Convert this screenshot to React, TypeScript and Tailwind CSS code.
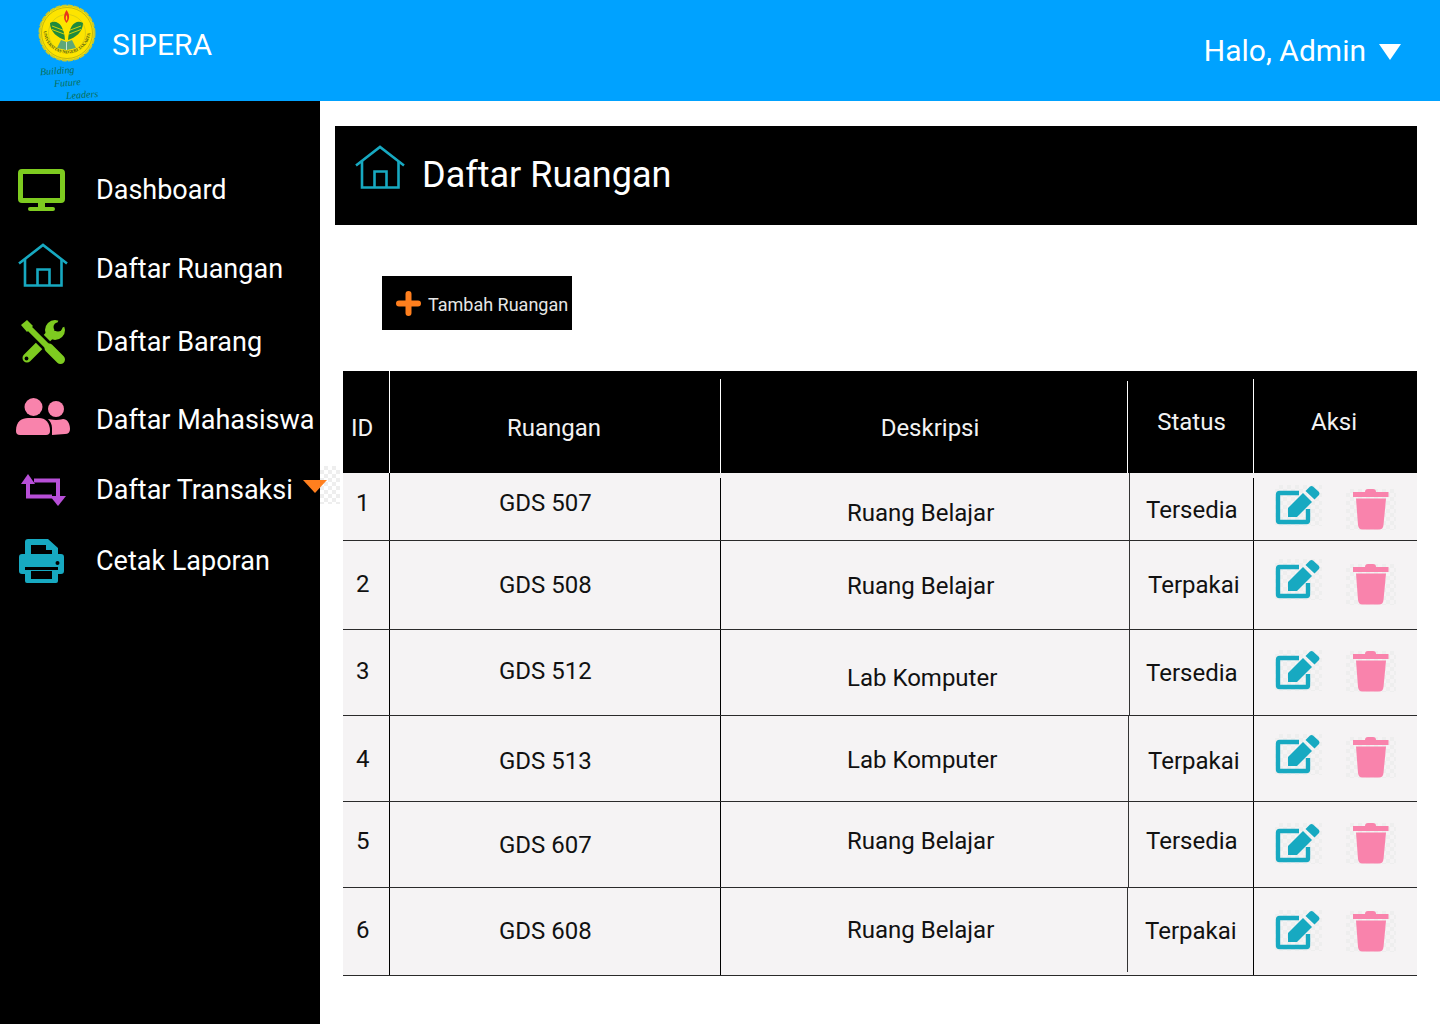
import React from 'react';

const TEAL = '#17a9c1';
const GREEN = '#7ecb20';
const PINK = '#f983ac';
const PURPLE = '#b84fd8';
const ORANGE = '#ff7f1e';

const CHECKER =
  'bg-[conic-gradient(#eeeeee_25%,transparent_0_50%,#eeeeee_0_75%,transparent_0)] bg-[length:8px_8px]';

const Logo = () => (
  <svg viewBox="0 0 60 60" className="w-[60px] h-[60px]">
    <defs>
      <path id="seal-arc" d="M6.5,27 A23.5,23.5 0 0 0 53.5,27" />
    </defs>
    <circle cx="30" cy="30" r="27.5" fill="#fde400" stroke="#c9c92a" strokeWidth="2" strokeDasharray="5 1.2" />
    <circle cx="30" cy="30" r="25.5" fill="none" stroke="#9a9a1a" strokeWidth="0.6" />
    <circle cx="30" cy="30" r="18.5" fill="none" stroke="#b8b820" strokeWidth="0.5" />
    <text fontSize="4.3" fill="#4d5a10" fontFamily="'Liberation Serif', serif" fontWeight="700">
      <textPath href="#seal-arc" startOffset="2%">
        UNIVERSITAS NEGERI JAKARTA
      </textPath>
    </text>
    <path d="M29.5,7 C26.5,12 26,16 29.5,20 C33,16 33,12 29.5,7 Z" fill="#e8341c" />
    <path d="M29.5,12 C28.5,14 28.5,16 29.5,18 C30.5,16 30.5,14 29.5,12 Z" fill="#fde400" />
    <path d="M13,20 C20,16 27,22 28,37 C21,35 13,29 13,20 Z" fill="#1f8a3c" />
    <path d="M46,20 C39,16 32,22 31,37 C38,35 46,29 46,20 Z" fill="#1f8a3c" />
    <path d="M15,23 L27,27.5 M15,26.5 L27,31 M44,23 L32,27.5 M44,26.5 L32,31" stroke="#fde400" strokeWidth="0.8" />
    <path d="M20,45 L24,37 L29.5,39 L35,37 L39,45 L29.5,47 Z" fill="#5fa878" />
    <path d="M29.5,39 V47" stroke="#fff" strokeWidth="0.7" />
  </svg>
);

const MonitorIcon = () => (
  <svg viewBox="0 0 47 42" className="w-[47px] h-[42px]" fill={GREEN}>
    <rect x="2.5" y="2.5" width="42" height="29" rx="1.5" fill="none" stroke={GREEN} strokeWidth="5" />
    <rect x="20" y="33" width="7" height="6" />
    <rect x="10" y="38" width="27" height="4" rx="2" />
  </svg>
);

const HouseIcon = () => (
  <svg viewBox="0 0 50 44" className="w-[50px] h-[44px]" fill="none" stroke={TEAL} strokeWidth="2.6">
    <path d="M1,20.5 L25,2 L49,20.5" />
    <path d="M7,16 V42.5 H43.5 V16" />
    <path d="M19.5,42.5 V26.5 H31.5 V42.5" />
  </svg>
);

const ToolsIcon = () => (
  <svg viewBox="0 0 44 44" className="w-[44px] h-[44px]" fill="none">
    <path d="M31,13 L6,38" stroke={GREEN} strokeWidth="9" strokeLinecap="round" />
    <circle cx="34" cy="10" r="10" fill={GREEN} />
    <path d="M33,11 L38,-1 H45 V6 Z" fill="#000" />
    <circle cx="37" cy="7" r="4.5" fill="#000" />
    <circle cx="5.5" cy="38.5" r="1.9" fill="#000" />
    <path d="M6,6 L30,30" stroke="#000" strokeWidth="11" />
    <path d="M6,6 L28,28" stroke={GREEN} strokeWidth="6" />
    <path d="M0,5 L6,0 L12,6 L6,12 Z" fill={GREEN} />
    <path d="M28,28 L39.5,39.5" stroke={GREEN} strokeWidth="9" strokeLinecap="round" />
  </svg>
);

const UsersIcon = () => (
  <svg viewBox="0 0 54 37" className="w-[54px] h-[37px]" fill={PINK}>
    <circle cx="17.5" cy="9" r="9" />
    <path d="M0,33 C0,23 6,20 12,20 H23 C29,20 34,24 34,33 Q34,37 30,37 H4 Q0,37 0,33 Z" />
    <circle cx="40" cy="11" r="8" />
    <path d="M36,37 V30 C36,26 34,23 32,21 C34,21 36,22 40,22 C44,22 46,21 47,21 C51,21 54,25 54,31 Q54,36 49,36 Z" />
  </svg>
);

const TransferIcon = () => (
  <svg viewBox="0 0 45 32" className="w-[45px] h-[32px]" fill={PURPLE}>
    <path d="M7,9 V22.5 H31 M13,6.5 H37 V22" fill="none" stroke={PURPLE} strokeWidth="4" />
    <path d="M0,10 L7,0 L14,10 Z" />
    <path d="M29,22 H45 L37,32 Z" />
  </svg>
);

const PrinterIcon = () => (
  <svg viewBox="0 0 45 44" className="w-[45px] h-[44px]" fill={TEAL}>
    <path d="M6,16 V3 Q6,0 9,0 H29 L39,9 V16 H33 V11 H27 V6 H12 V16 Z" />
    <path d="M3,15 H42 Q45,15 45,18 V32 Q45,35 42,35 H39 V42 Q39,44 37,44 H8 Q6,44 6,42 V35 H3 Q0,35 0,32 V18 Q0,15 3,15 Z" />
    <rect x="12" y="32" width="21" height="8" fill="#000" />
    <rect x="6" y="28" width="33" height="3" fill="#000" />
    <circle cx="38.5" cy="24" r="2" fill="#000" />
  </svg>
);

const EditIcon = () => (
  <svg viewBox="0 0 46 41" className="w-[46px] h-[41px]">
    <path d="M24,8 H4.5 Q3,8 3,9.5 V35.5 Q3,37 4.5,37 H31.5 Q33,37 33,35.5 V24" fill="none" stroke={TEAL} strokeWidth="4.4" />
    <path d="M13,32 V23 L28,8 L37,17 L22,32 Z" fill={TEAL} />
    <path d="M30.5,6 L35,1.5 Q36.5,0.5 38,1.5 L44,7 Q45,8.5 44,10 L39.5,14.5 Z" fill={TEAL} />
  </svg>
);

const TrashIcon = () => (
  <svg viewBox="0 0 36 41" className="w-[36px] h-[41px]" fill={PINK}>
    <path d="M12,3 Q12,0 15,0 H20 Q23,0 23,3 V4 H12 Z" />
    <rect x="0" y="3" width="35.5" height="5" />
    <path d="M3,9.5 H33 L30.5,36 Q30,40.5 26,40.5 H9.5 Q5.5,40.5 5,36 Z" />
  </svg>
);

const PlusIcon = () => (
  <svg viewBox="0 0 25 25" className="w-[25px] h-[25px]" stroke={ORANGE} strokeWidth="6" strokeLinecap="round">
    <path d="M12.5,3 V22 M3,12.5 H22" />
  </svg>
);

const menu = [
  { label: 'Dashboard', icon: <MonitorIcon />, row: 'mt-0', iconBox: 'pl-[18px]' },
  { label: 'Daftar Ruangan', icon: <HouseIcon />, row: 'mt-[29px]', iconBox: 'pl-[18px] pb-2' },
  { label: 'Daftar Barang', icon: <ToolsIcon />, row: 'mt-[23px]', iconBox: 'pl-[21px]' },
  { label: 'Daftar Mahasiswa', icon: <UsersIcon />, row: 'mt-[28px]', iconBox: 'pl-4 pb-2' },
  { label: 'Daftar Transaksi', icon: <TransferIcon />, row: 'mt-5', iconBox: 'pl-[21px]' },
  { label: 'Cetak Laporan', icon: <PrinterIcon />, row: 'mt-[21px]', iconBox: 'pl-[19px]' },
];

const rooms = [
  {
    id: '1', name: 'GDS 507', desc: 'Ruang Belajar', status: 'Tersedia',
    h: 'h-[68px]', idPt: 'pt-[15px]', namePt: 'pt-[15px]', descPt: 'pt-[25px]', statusPt: 'pt-[22px] pl-4',
    descW: 'w-[408px]', editPt: 'pt-3', trashPt: 'pt-4', sep: 'mt-[5px]',
  },
  {
    id: '2', name: 'GDS 508', desc: 'Ruang Belajar', status: 'Terpakai',
    h: 'h-[89px]', idPt: 'pt-[28px]', namePt: 'pt-[29px]', descPt: 'pt-[30px]', statusPt: 'pt-[29px] pl-[18px]',
    descW: 'w-[408px]', editPt: 'pt-[18px]', trashPt: 'pt-[23px]', sep: 'mt-0',
  },
  {
    id: '3', name: 'GDS 512', desc: 'Lab Komputer', status: 'Tersedia',
    h: 'h-[86px]', idPt: 'pt-[26px]', namePt: 'pt-[26px]', descPt: 'pt-[33px]', statusPt: 'pt-[28px] pl-4',
    descW: 'w-[408px]', editPt: 'pt-5', trashPt: 'pt-[21px]', sep: 'mt-0',
  },
  {
    id: '4', name: 'GDS 513', desc: 'Lab Komputer', status: 'Terpakai',
    h: 'h-[86px]', idPt: 'pt-[28px]', namePt: 'pt-[30px]', descPt: 'pt-[29px]', statusPt: 'pt-[30px] pl-[19px]',
    descW: 'w-[407px]', editPt: 'pt-[18px]', trashPt: 'pt-[21px]', sep: 'mt-0',
  },
  {
    id: '5', name: 'GDS 607', desc: 'Ruang Belajar', status: 'Tersedia',
    h: 'h-[86px]', idPt: 'pt-6', namePt: 'pt-7', descPt: 'pt-6', statusPt: 'pt-6 pl-[17px]',
    descW: 'w-[407px]', editPt: 'pt-[21px]', trashPt: 'pt-[21px]', sep: 'mt-0',
  },
  {
    id: '6', name: 'GDS 608', desc: 'Ruang Belajar', status: 'Terpakai',
    h: 'h-[88px]', idPt: 'pt-[27px]', namePt: 'pt-7', descPt: 'pt-[27px]', statusPt: 'pt-7 pl-[17px]',
    descW: 'w-[406px]', editPt: 'pt-[22px]', trashPt: 'pt-[23px]', sep: 'mt-0',
  },
];

export default function App() {
  return (
    <div className="w-[1440px] h-[1024px] overflow-hidden flex flex-col bg-white font-['Roboto',sans-serif]">
      {/* top bar */}
      <header className="h-[101px] shrink-0 bg-[#00a2ff] flex justify-between text-white">
        <div className="relative flex pl-[37px] pt-[3px]">
          <Logo />
          <span className="absolute left-[40px] top-[66px] -rotate-[4deg] text-[10px] leading-none italic text-[#0b6e5a] font-['Liberation_Serif',serif]">
            Building
          </span>
          <span className="absolute left-[54px] top-[78px] -rotate-[4deg] text-[10px] leading-none italic text-[#0b6e5a] font-['Liberation_Serif',serif]">
            Future
          </span>
          <span className="absolute left-[66px] top-[90px] -rotate-[4deg] text-[10px] leading-none italic text-[#0b6e5a] font-['Liberation_Serif',serif]">
            Leaders
          </span>
          <span className="ml-[15px] mt-[24px] text-[30px] leading-9">SIPERA</span>
        </div>
        <div className="flex items-start pt-[31px] pr-[39px]">
          <span className="text-[30px] leading-10">Halo, Admin</span>
          <span className="ml-[13px] mt-[13px] w-0 h-0 border-l-[11px] border-r-[11px] border-t-[16px] border-l-transparent border-r-transparent border-t-white" />
        </div>
      </header>

      <div className="flex flex-1">
        {/* sidebar */}
        <aside className="w-[320px] shrink-0 bg-black pt-16 text-white relative z-10">
          {menu.map((item) => (
            <div key={item.label} className={`relative h-[50px] flex items-center ${item.row}`}>
              <div className={`w-[96px] shrink-0 ${item.iconBox}`}>{item.icon}</div>
              <span className="text-[27px] leading-9 whitespace-nowrap">{item.label}</span>
              {item.label === 'Daftar Transaksi' && (
                <>
                  <div className={`absolute left-[320px] top-px w-5 h-[38px] ${CHECKER}`} />
                  <span className="absolute left-[303px] top-[15px] w-0 h-0 border-l-[12px] border-r-[12px] border-t-[13px] border-l-transparent border-r-transparent border-t-[#ff7f1e]" />
                </>
              )}
            </div>
          ))}
        </aside>

        {/* content */}
        <main className="flex-1 pl-[15px] pr-[23px] pt-[25px]">
          <div className="h-[99px] bg-black flex items-center text-white pl-5">
            <div className="-mt-[17px]">
              <HouseIcon />
            </div>
            <h1 className="ml-[17px] -mt-0.5 text-[36px] leading-[44px] font-normal">Daftar Ruangan</h1>
          </div>

          <button className="mt-[51px] ml-[47px] w-[190px] h-[54px] bg-black flex items-center pl-[14px] text-[18px] text-[#e6e6e6] whitespace-nowrap">
            <PlusIcon />
            <span className="ml-[7px] mt-[3px]">Tambah Ruangan</span>
          </button>

          <div className="mt-[41px] ml-2 text-[24px] leading-[30px]">
            {/* table head */}
            <div className="h-[102px] bg-black text-[#f2f2f2] flex">
              <div className="w-[46px] pl-2 pt-[42px]">ID</div>
              <div className="w-px bg-white" />
              <div className="w-[330px] text-center pr-0.5 pt-[42px]">Ruangan</div>
              <div className="w-px bg-white mt-2" />
              <div className="w-[406px] text-center pl-3 pt-[42px]">Deskripsi</div>
              <div className="w-px bg-white mt-2.5" />
              <div className="flex-1 text-center pl-0.5 pt-9">Status</div>
              <div className="w-px bg-white mt-2" />
              <div className="w-[163px] text-center pr-[3px] pt-9">Aksi</div>
            </div>

            {/* table body */}
            {rooms.map((room) => (
              <div key={room.id} className={`flex bg-[#f5f3f4] border-b border-[#2a2a2a] text-[#111111] ${room.h}`}>
                <div className={`w-[46px] pl-[13px] ${room.idPt}`}>{room.id}</div>
                <div className="w-px bg-black" />
                <div className={`w-[330px] pl-[109px] ${room.namePt}`}>{room.name}</div>
                <div className={`w-px bg-black ${room.sep}`} />
                <div className={`pl-[126px] ${room.descW} ${room.descPt}`}>{room.desc}</div>
                <div className={`w-px bg-[#333333] ${room.id === '6' ? 'mb-[3px]' : ''}`} />
                <div className={`flex-1 ${room.statusPt}`}>{room.status}</div>
                <div className={`w-px bg-black ${room.sep}`} />
                <div className="w-[163px] flex pl-[21px]">
                  <div className={room.editPt}>
                    <div className={`w-[47px] h-[41px] ${CHECKER}`}>
                      <EditIcon />
                    </div>
                  </div>
                  <div className={`ml-6 ${room.trashPt}`}>
                    <div className={`w-[50px] h-[41px] pl-[7px] ${CHECKER}`}>
                      <TrashIcon />
                    </div>
                  </div>
                </div>
              </div>
            ))}
          </div>
        </main>
      </div>
    </div>
  );
}
